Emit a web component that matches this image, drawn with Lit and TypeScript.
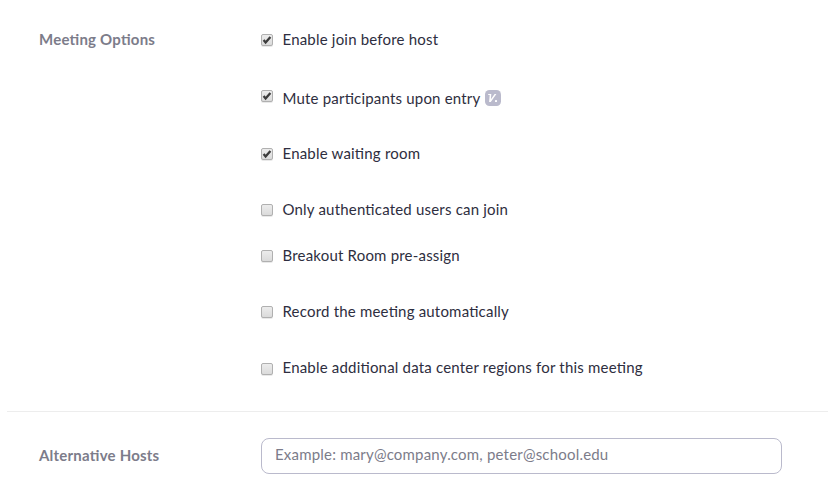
import { LitElement, html, css, svg } from "lit";
import { customElement, property } from "lit/decorators.js";

interface Option { label: string; checked: boolean; top: number; box: number; badge?: boolean; }

const options: Option[] = [
  { label: "Enable join before host", checked: true, top: 29, box: 1 },
  { label: "Mute participants upon entry", checked: true, top: 39, box: -2, badge: true },
  { label: "Enable waiting room", checked: true, top: 35, box: 1 },
  { label: "Only authenticated users can join", checked: false, top: 36, box: 1 },
  { label: "Breakout Room pre-assign", checked: false, top: 26, box: 1 },
  { label: "Record the meeting automatically", checked: false, top: 36, box: 1 },
  { label: "Enable additional data center regions for this meeting", checked: false, top: 36, box: 2 },
];

@customElement("option-box")
export class OptionBox extends LitElement {
  @property({ type: Boolean }) checked = false;
  static styles = css`
    :host { display: block; width: 12px; height: 13px; }
    svg { display: block; }
  `;
  render() {
    return html`<svg width="12" height="13" viewBox="0 0 12 13">
      <defs><linearGradient id="g" x1="0" y1="0" x2="0" y2="1"><stop offset="0" stop-color="#ededed"/><stop offset="1" stop-color="#dadada"/></linearGradient></defs>
      <rect y="1" width="12" height="12" rx="2" fill="#e9e9e9"/>
      <rect x=".5" y=".5" width="11" height="11" rx="1.5" fill="url(#g)" stroke="#b0b0b0"/>
      ${this.checked ? svg`<path d="M2.6 6.1 L4.6 8.5 L9.4 3" fill="none" stroke="#3c3c3c" stroke-width="2.3"/>` : null}
    </svg>`;
  }
}

@customElement("app-root")
export class AppRoot extends LitElement {
  static styles = css`
    :host { display: block; height: 494px; overflow: hidden; background: #fff; color: #2e2e40; font: 15px/20px Lato, sans-serif; letter-spacing: .195px; font-feature-settings: "liga" 1; }
    .section { display: grid; grid-template-columns: 222px 1fr; padding-left: 39px; }
    .title { font-weight: 700; color: #7c7c8a; letter-spacing: .22px; }
    .options { height: 411px; box-sizing: border-box; }
    .options .title { padding-top: 29px; }
    .row { display: flex; gap: 9.5px; height: 20px; white-space: nowrap; }
    .row option-box { margin-top: 4px; }
    .badge { margin: 2px 0 0 -5px; }
    .hosts { border-top: 1px solid #ededed; margin-left: 7px; padding: 26px 0 0 32px; }
    .hosts .title { padding-top: 7px; }
    .field { box-sizing: border-box; width: 521px; height: 36px; border: 1px solid #babacc; border-radius: 8px; padding: 0 13px 4px; font: inherit; letter-spacing: inherit; font-feature-settings: inherit; color: #2e2e40; background: #fff; outline: none; }
    .field::placeholder { color: #7c7c8a; opacity: 1; }
  `;
  render() {
    return html`
      <section class="section options">
        <div class="title">Meeting Options</div>
        <div>${options.map(o => html`
          <div class="row" style="margin-top:${o.top}px">
            <option-box ?checked=${o.checked} style="transform:translateY(${o.box}px)"></option-box>
            <span>${o.label}</span>
            ${o.badge ? html`<svg class="badge" width="16" height="16" viewBox="0 0 16 16"><rect width="16" height="16" rx="4.5" fill="#babacc"/><path d="M3.3 3.9H6.3L5.9 9.2L9.6 3.9H11.4L5.8 12H4.1L4.7 5.1H3.1Z" fill="#fff"/><rect x="10" y="10" width="2" height="2" rx=".6" fill="#fff"/></svg>` : null}
          </div>`)}</div>
      </section>
      <section class="section hosts">
        <div class="title">Alternative Hosts</div>
        <input class="field" placeholder="Example: mary@company.com, peter@school.edu">
      </section>`;
  }
}
